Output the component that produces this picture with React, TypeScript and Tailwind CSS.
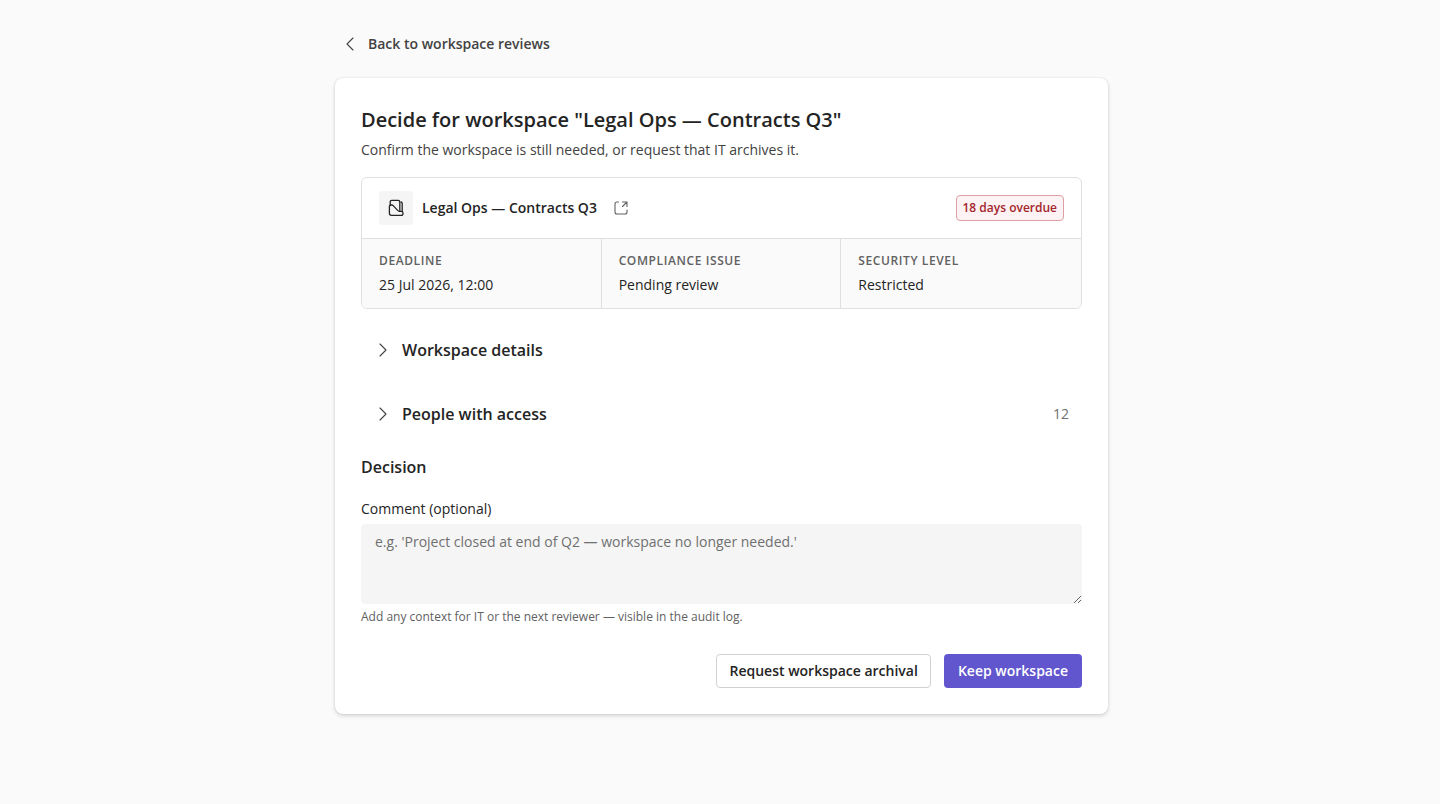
import React from 'react';

const facts = [
  { label: 'Deadline', value: '25 Jul 2026, 12:00' },
  { label: 'Compliance issue', value: 'Pending review' },
  { label: 'Security level', value: 'Restricted' },
];

const Chevron = ({ className }: { className?: string }) => (
  <svg width="18" height="18" viewBox="0 0 18 18" fill="none" stroke="currentColor" strokeWidth="1.1" strokeLinecap="round" strokeLinejoin="round" className={className} aria-hidden="true">
    <path d="M6 3l6 6-6 6" />
  </svg>
);

const WorkspaceIcon = () => (
  <svg width="18" height="18" viewBox="0 0 18 18" fill="none" stroke="currentColor" strokeWidth="1.3" strokeLinejoin="round" strokeLinecap="round" aria-hidden="true">
    <path d="M3.2 6V3c0-1 .6-1.6 1.6-1.6h6.4c1 0 1.6.6 1.6 1.6v9" />
    <path d="M14 3c.8.2 1.2.7 1.2 1.5v7.8" />
    <path d="M2.4 7.6c0-1 .6-1.6 1.5-1.6h.9c.6 0 1 .2 1.4.6l4.7 5c.5.5 1 .8 1.7.8h1.7c1 0 1.7.6 1.7 1.5v.5c0 1.1-.8 1.9-1.9 1.9H4.5c-1.2 0-2.1-.9-2.1-2.1z" />
  </svg>
);

const OpenIcon = () => (
  <svg width="16" height="16" viewBox="0 0 16 16" fill="none" stroke="currentColor" strokeWidth="1.1" strokeLinecap="round" strokeLinejoin="round" aria-hidden="true">
    <path d="M5.5 2H4C2.9 2 2 2.900 2 4v8c0 1.100.9 2 2 2h8c1.100 0 2-.9 2-2v-2" />
    <path d="M9.500 2H14v4.500M14 2L9.500 6.500" />
  </svg>
);

const Section = ({ title, count }: { title: string; count?: number }) => {
  const [open, setOpen] = React.useState(false);

  return (
    <button
      type="button"
      aria-expanded={open}
      onClick={() => setOpen(!open)}
      className="flex h-[46px] w-full items-center gap-2.5 px-[13px] text-left"
    >
      <Chevron className={open ? 'rotate-90 text-[#424242]' : 'text-[#424242]'} />
      <span className="flex-1 text-base font-semibold">{title}</span>
      {count !== undefined && <span className="text-sm text-[#707070]">{count}</span>}
    </button>
  );
};

export default function App() {
  return (
    <div className="min-h-screen bg-[#fafafa] py-7 pr-4 pl-[19px] font-['Open_Sans',sans-serif] text-sm text-[#242424]">
      <main className="mx-auto max-w-[773px]">
        <a href="#reviews" className="ml-1.5 inline-flex h-8 items-center gap-[9px] text-sm font-semibold text-[#424242]">
          <Chevron className="rotate-180" />
          Back to workspace reviews
        </a>

        <div className="mt-[18px] rounded-lg bg-white p-[26px] shadow-[0_0_2px_rgba(0,0,0,0.12),0_2px_4px_rgba(0,0,0,0.14)]">
          <h1 className="text-xl leading-8 font-semibold">Decide for workspace "Legal Ops — Contracts Q3"</h1>
          <p className="mt-1 text-sm leading-5 text-[#424242]">
            Confirm the workspace is still needed, or request that IT archives it.
          </p>

          <section className="mt-[17px] overflow-hidden rounded-md border border-[#e0e0e0]">
            <div className="flex h-[60px] items-center px-[17px]">
              <span className="flex size-[34px] items-center justify-center rounded-sm bg-[#f5f5f5]">
                <WorkspaceIcon />
              </span>
              <h2 className="ml-[9px] text-sm font-semibold">Legal Ops — Contracts Q3</h2>
              <a href="#workspace" aria-label="Open workspace" className="ml-4 text-[#616161]">
                <OpenIcon />
              </a>
              <span className="ml-auto rounded border border-[#dc9fa6] bg-[#fdf3f4] px-1.5 text-xs leading-6 font-semibold text-[#a3262c]">
                18 days overdue
              </span>
            </div>
            <dl className="grid grid-cols-3 divide-x divide-[#e0e0e0] border-t border-[#e0e0e0] bg-[#fafafa]">
              {facts.map((fact) => (
                <div key={fact.label} className="px-[17px] pt-3 pb-[13px]">
                  <dt className="text-xs leading-5 font-semibold tracking-wider text-[#616161] uppercase">{fact.label}</dt>
                  <dd className="mt-1 text-sm leading-5">{fact.value}</dd>
                </div>
              ))}
            </dl>
          </section>

          <div className="mt-[18px] flex flex-col gap-[18px]">
            <Section title="Workspace details" />
            <Section title="People with access" count={12} />
          </div>

          <h2 className="mt-[18px] text-base leading-6 font-semibold">Decision</h2>
          <label htmlFor="comment" className="mt-5 block text-sm leading-5">Comment (optional)</label>
          <textarea
            id="comment"
            aria-describedby="comment-hint"
            placeholder="e.g. 'Project closed at end of Q2 — workspace no longer needed.'"
            className="mt-[5px] block h-20 w-full resize-y rounded bg-[#f5f5f5] px-3.5 py-2 text-sm leading-5 outline-none placeholder:text-[#707070]"
          />
          <p id="comment-hint" className="mt-1 text-xs leading-[18px] text-[#616161]">
            Add any context for IT or the next reviewer — visible in the audit log.
          </p>

          <div className="mt-7 flex justify-end gap-[13px]">
            <button type="button" className="h-[34px] rounded border border-[#d1d1d1] bg-white px-3 text-sm font-semibold">
              Request workspace archival
            </button>
            <button type="button" className="h-[34px] rounded bg-[#6156cd] px-3.5 text-sm font-semibold text-white">
              Keep workspace
            </button>
          </div>
        </div>
      </main>
    </div>
  );
}
